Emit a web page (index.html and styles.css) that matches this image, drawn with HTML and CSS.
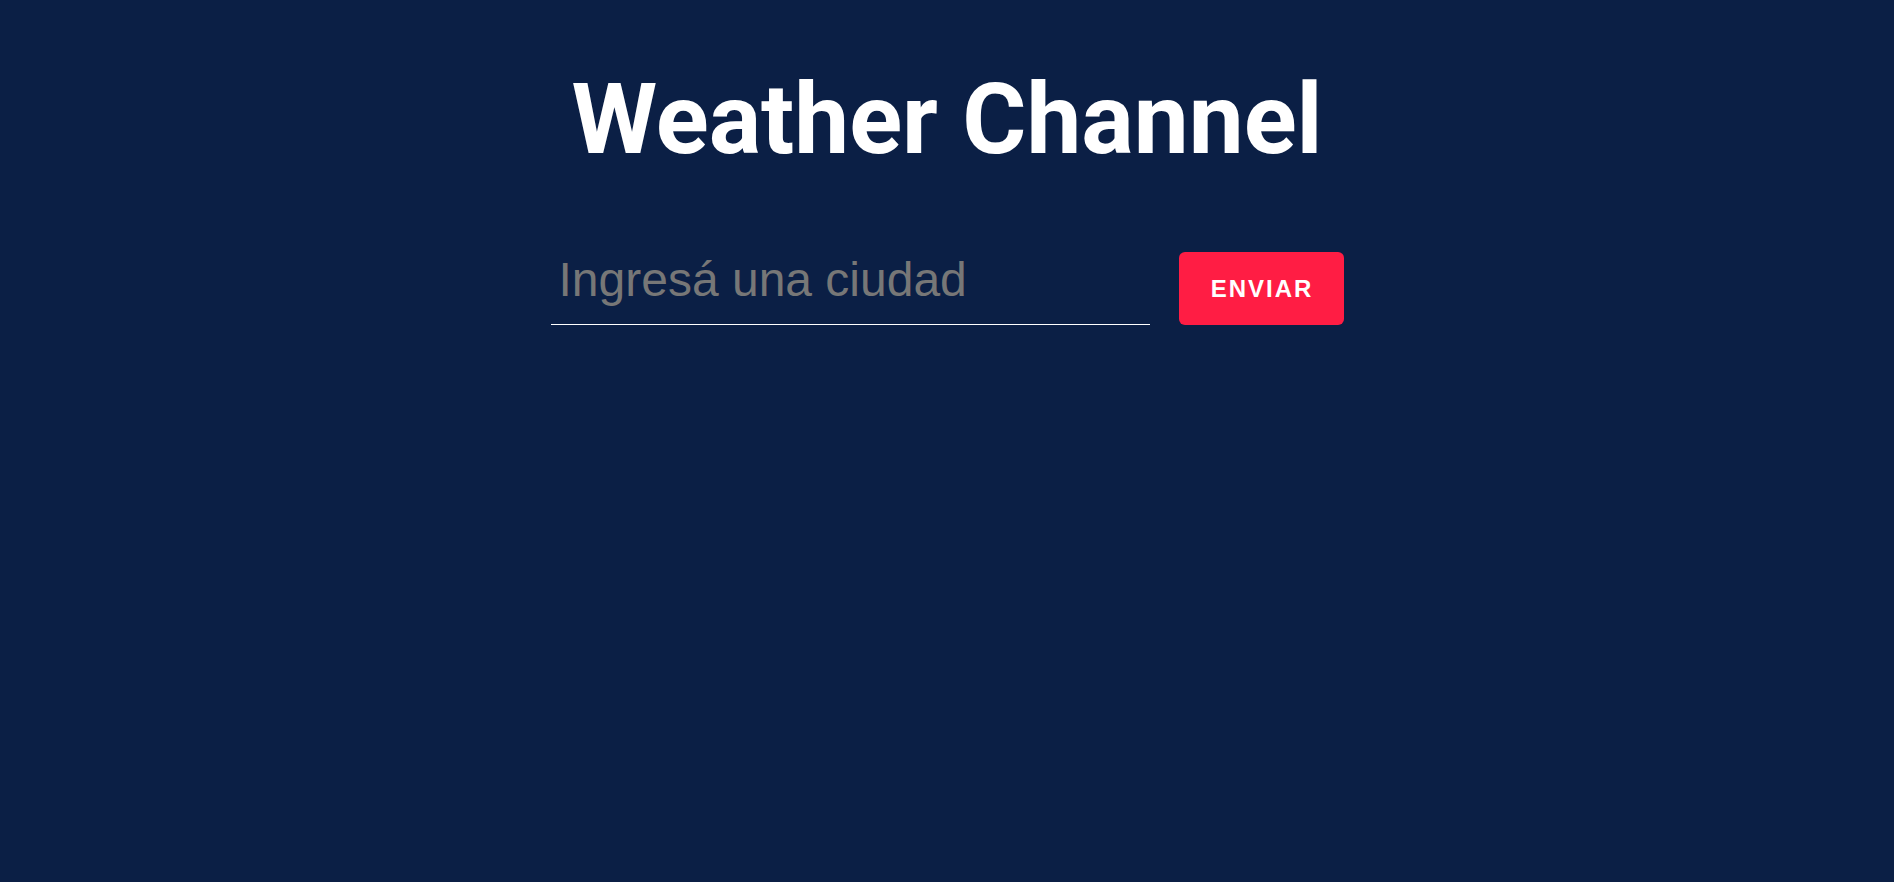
FILE: index.html
```html
<!DOCTYPE html>
<html lang="es">
<head>
<meta charset="utf-8">
<title>Weather Channel</title>
<link rel="stylesheet" href="styles.css">
</head>
<body>
<main class="app">
  <h1 class="title">Weather Channel</h1>
  <form class="search">
    <input class="search-input" type="text" placeholder="Ingresá una ciudad">
    <button class="search-btn" type="button">ENVIAR</button>
  </form>
</main>
</body>
</html>
```

FILE: styles.css
```css
html, body {
  margin: 0;
  padding: 0;
  height: 100%;
  background: #0b1f45;
}
.app {
  display: flex;
  flex-direction: column;
  align-items: center;
  padding-top: 60px;
}
.title {
  margin: 0;
  font-family: Roboto, "Liberation Sans", sans-serif;
  font-weight: 700;
  font-size: 98px;
  line-height: 120px;
  color: #ffffff;
}
.search {
  display: flex;
  align-items: flex-end;
  gap: 29px;
  margin-top: 72px;
}
.search-input {
  width: 599px;
  box-sizing: border-box;
  height: 73px;
  padding: 0 8px 17px;
  border: none;
  border-bottom: 1px solid #ffffff;
  background: transparent;
  color: #ffffff;
  font-family: "Liberation Sans", Arial, sans-serif;
  font-size: 48px;
  outline: none;
}
.search-input::placeholder {
  color: #777777;
}
.search-btn {
  width: 165px;
  height: 73px;
  border: none;
  border-radius: 6px;
  background: #ff1d44;
  color: #ffffff;
  font-family: "Liberation Sans", Arial, sans-serif;
  font-weight: 700;
  font-size: 24px;
  letter-spacing: 2px;
  padding: 0 0 0 2px;
  cursor: pointer;
}
```
